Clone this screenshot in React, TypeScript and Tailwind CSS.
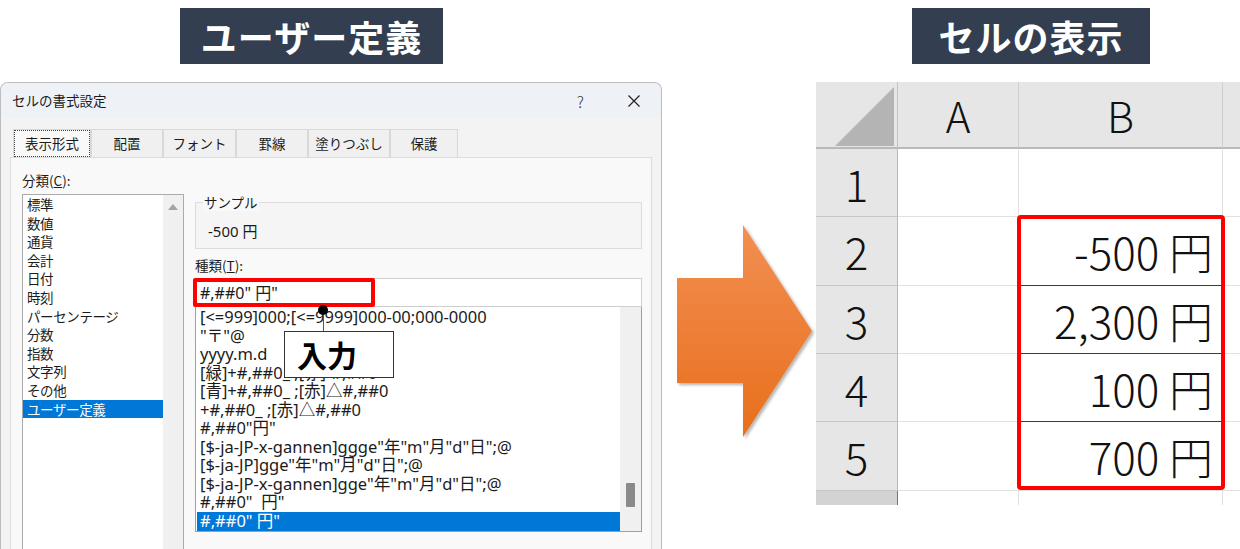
import React from "react";

const categories = [
  "標準",
  "数値",
  "通貨",
  "会計",
  "日付",
  "時刻",
  "パーセンテージ",
  "分数",
  "指数",
  "文字列",
  "その他",
  "ユーザー定義",
];

const formats = [
  "[<=999]000;[<=9999]000-00;000-0000",
  '"〒"@',
  "yyyy.m.d",
  "[緑]+#,##0_ ;[赤]-#,##0",
  "[青]+#,##0_ ;[赤]△#,##0",
  "+#,##0_ ;[赤]△#,##0",
  '#,##0"円"',
  '[$-ja-JP-x-gannen]ggge"年"m"月"d"日";@',
  '[$-ja-JP]gge"年"m"月"d"日";@',
  '[$-ja-JP-x-gannen]gge"年"m"月"d"日";@',
  '#,##0"  円"',
  '#,##0" 円"',
];

const tabs = [
  { label: "表示形式", w: "w-[78px]" },
  { label: "配置", w: "w-[72px]" },
  { label: "フォント", w: "w-[73px]" },
  { label: "罫線", w: "w-[72px]" },
  { label: "塗りつぶし", w: "w-[82px]" },
  { label: "保護", w: "w-[68px]" },
];

const rows = [
  { n: "1", h: "h-[68px]", v: "" },
  { n: "2", h: "h-[69px]", v: "-500 円" },
  { n: "3", h: "h-[68px]", v: "2,300 円" },
  { n: "4", h: "h-[68px]", v: "100 円" },
  { n: "5", h: "h-[69px]", v: "700 円" },
];

// latin-first stack for the format code texts (wider, like Meiryo)
const codeFont = { fontFamily: "'Noto Sans', 'Noto Sans CJK JP', sans-serif" };

function TitleBox({ text, w }: { text: string; w: string }) {
  return (
    <div
      className={`${w} h-[56px] bg-[#333f50] text-white font-bold text-[36px] flex items-center justify-center tracking-[1px]`}
    >
      {text}
    </div>
  );
}

function Dialog() {
  return (
    <div className="flex-1 border border-b-0 border-[#bdbdbd] rounded-t-[8px] bg-[#f3f3f3] overflow-hidden flex flex-col text-[#1b1b1b]">
      {/* Title bar */}
      <div className="h-[35px] shrink-0 bg-[#eef2f7] flex items-center pl-[11px]">
        <span className="text-[13.5px]">セルの書式設定</span>
        <span className="ml-auto text-[16px] font-light text-[#333]">?</span>
        <svg width="12" height="12" viewBox="0 0 12 12" className="ml-[44px] mr-[21px]">
          <path d="M0.5 0.5 L11.5 11.5 M11.5 0.5 L0.5 11.5" stroke="#222" strokeWidth="1.2" />
        </svg>
      </div>

      {/* Tabs */}
      <div className="pt-[11px] pl-[12px] flex shrink-0">
        {tabs.map((t, i) => (
          <div
            key={t.label}
            className={`${t.w} h-[28px] border border-b-0 border-[#d9d9d9] text-[13.5px] flex items-center justify-center ${
              i === 0 ? "bg-[#f9f9f9]" : "bg-[#f0f0f0]"
            }`}
          >
            {i === 0 ? (
              <span className="w-full h-full border border-dotted border-[#444] flex items-center justify-center">
                {t.label}
              </span>
            ) : (
              t.label
            )}
          </div>
        ))}
      </div>

      {/* Panel */}
      <div className="ml-[9px] w-[642px] flex-1 border border-b-0 border-[#dcdcdc] bg-[#f9f9f9] flex items-start pl-[11px] pt-[13px]">
        {/* Category */}
        <div className="w-[162px] shrink-0">
          <div className="h-[18px] leading-[18px] text-[13.5px]">
            分類(<span className="underline">C</span>):
          </div>
          <div className="mt-[5px] h-[370px] border border-[#ababab] bg-white flex">
            <div className="flex-1">
              {categories.map((c, i) => (
                <div
                  key={c}
                  className={`h-[18.6px] leading-[18.6px] pl-[4px] text-[13.5px] tracking-[-0.4px] ${
                    i === categories.length - 1 ? "bg-[#0078d7] text-white" : ""
                  }`}
                >
                  {c}
                </div>
              ))}
            </div>
            <div className="w-[20px] bg-[#f0f0f0] flex justify-center pt-[9px]">
              <svg width="10" height="6" viewBox="0 0 10 6">
                <path d="M0 6 L5 0 L10 6 Z" fill="#a3a3a3" />
              </svg>
            </div>
          </div>
        </div>

        {/* Right side */}
        <div className="ml-[11px] w-[447px]">
          <div className="relative mt-[31px] h-[47px] border border-[#dcdcdc] bg-[#f5f5f5]">
            <span className="absolute left-[7px] top-[-10px] px-[1px] bg-[#f9f9f9] text-[13.5px] leading-[18px]">
              サンプル
            </span>
            <div className="pl-[12px] pt-[19px] text-[15px] leading-[18px]" style={codeFont}>
              -500 円
            </div>
          </div>

          <div className="mt-[7px] h-[18px] leading-[18px] text-[13.5px]">
            種類(<span className="underline">T</span>):
          </div>

          <div className="relative mt-[4px]">
            <div
              className="h-[29px] border border-[#cfcfcf] bg-white pl-[4px] flex items-center text-[16px] whitespace-pre"
              style={codeFont}
            >
              #,##0" 円"
            </div>
            <div className="h-[225px] border border-t-0 border-[#a0a0a0] bg-white flex">
              <div className="flex-1 pl-[1px] pt-[1px]" style={codeFont}>
                {formats.map((f, i) => (
                  <div
                    key={i}
                    className={`h-[18.55px] leading-[18.55px] pl-[3px] text-[16.5px] whitespace-pre ${
                      i === formats.length - 1 ? "bg-[#0078d7] text-white" : ""
                    }`}
                  >
                    {f}
                  </div>
                ))}
              </div>
              <div className="w-[21px] bg-[#f0f0f0] pt-[176px] pl-[6px]">
                <div className="w-[9px] h-[24px] bg-[#8a8a8a] rounded-[1px]" />
              </div>
            </div>

            {/* Highlight & callout */}
            <div className="absolute left-[-2px] top-[0px] w-[182px] h-[29px] border-[4px] border-[#ff0000] rounded-[2px]" />
            <div className="absolute left-[128px] top-[32px] w-[1px] h-[21px] bg-[#555]" />
            <div className="absolute left-[123px] top-[27px] w-[10px] h-[10px] rounded-full bg-black" />
            <div className="absolute left-[89px] top-[53px] w-[110px] h-[47px] bg-white border border-[#333] flex items-center pl-[12px] text-[30px] font-bold text-black">
              入力
            </div>
          </div>
        </div>
      </div>
    </div>
  );
}

function Arrow() {
  return (
    <svg width="146" height="222" viewBox="0 0 146 222">
      <defs>
        <linearGradient id="ag" x1="0" y1="0" x2="0" y2="1">
          <stop offset="0" stopColor="#f28f52" />
          <stop offset="1" stopColor="#e86f1c" />
        </linearGradient>
        <filter id="sh" x="-10%" y="-10%" width="130%" height="130%">
          <feDropShadow dx="2" dy="2" stdDeviation="1.8" floodColor="#000" floodOpacity="0.3" />
        </filter>
      </defs>
      <polygon
        points="0,53 66,53 66,0 135,106 66,212 66,158 0,158"
        fill="url(#ag)"
        filter="url(#sh)"
      />
    </svg>
  );
}

function Sheet() {
  const numFont = "font-light text-[44px] text-[#111]";
  return (
    <div className="relative">
      {/* header */}
      <div className="flex h-[67px]">
        <div className="w-[82px] bg-[#e6e6e6] border-r border-r-[#c4c4c4] border-b-2 border-b-[#b9b9b9] flex items-end justify-end pr-[3px] pb-[1px]">
          <svg width="59" height="59" viewBox="0 0 59 59">
            <polygon points="0,59 59,0 59,59" fill="#b4b4b4" />
          </svg>
        </div>
        <div className="w-[121px] bg-[#e6e6e6] border-r border-r-[#cfcfcf] border-b-2 border-b-[#b9b9b9] flex items-center justify-center text-[42px] font-light text-[#111]">
          A
        </div>
        <div className="w-[204px] bg-[#e6e6e6] border-r border-r-[#cfcfcf] border-b-2 border-b-[#b9b9b9] flex items-center justify-center text-[42px] font-light text-[#111]">
          B
        </div>
        <div className="flex-1 bg-[#e6e6e6] border-b-2 border-b-[#b9b9b9]" />
      </div>

      {rows.map((r, i) => (
        <div key={r.n} className={`flex ${r.h}`}>
          <div
            className={`w-[82px] bg-[#e6e6e6] border-r border-r-[#b9b9b9] border-b border-b-[#c6c6c6] flex items-center justify-center ${numFont}`}
          >
            {r.n}
          </div>
          <div className="w-[121px] border-r border-b border-[#e1e1e1]" />
          <div
            className={`w-[204px] border-r border-r-[#e1e1e1] border-b ${
              i >= 1 && i <= 3 ? "border-b-[#3c3c3c]" : "border-b-[#e1e1e1]"
            } flex items-center justify-end pr-[9px] ${numFont}`}
          >
            {r.v}
          </div>
          <div className="flex-1 border-b border-[#e1e1e1]" />
        </div>
      ))}

      <div className="flex h-[14px]">
        <div className="w-[82px] bg-[#d3d3d3] border-r border-r-[#21a366]" />
        <div className="w-[121px] border-r border-[#e1e1e1]" />
        <div className="w-[204px] border-r border-[#e1e1e1]" />
        <div className="flex-1" />
      </div>

      {/* red highlight over B2:B5 */}
      <div className="absolute left-[201px] top-[133px] w-[208px] h-[275px] border-[4px] border-[#ff0000] rounded-[4px]" />
    </div>
  );
}

export default function App() {
  return (
    <div
      className="w-[1240px] h-[549px] bg-white flex overflow-hidden"
      style={{ fontFamily: "'Noto Sans CJK JP', 'Noto Sans', sans-serif" }}
    >
      <div className="w-[662px] shrink-0 flex flex-col">
        <div className="h-[82px] shrink-0 pl-[180px] pt-[8px]">
          <TitleBox text="ユーザー定義" w="w-[263px]" />
        </div>
        <Dialog />
      </div>

      <div className="w-[154px] shrink-0 pl-[15px] pt-[225px]">
        <Arrow />
      </div>

      <div className="flex-1 flex flex-col">
        <div className="h-[82px] shrink-0 pl-[96px] pt-[8px]">
          <TitleBox text="セルの表示" w="w-[238px]" />
        </div>
        <Sheet />
      </div>
    </div>
  );
}
